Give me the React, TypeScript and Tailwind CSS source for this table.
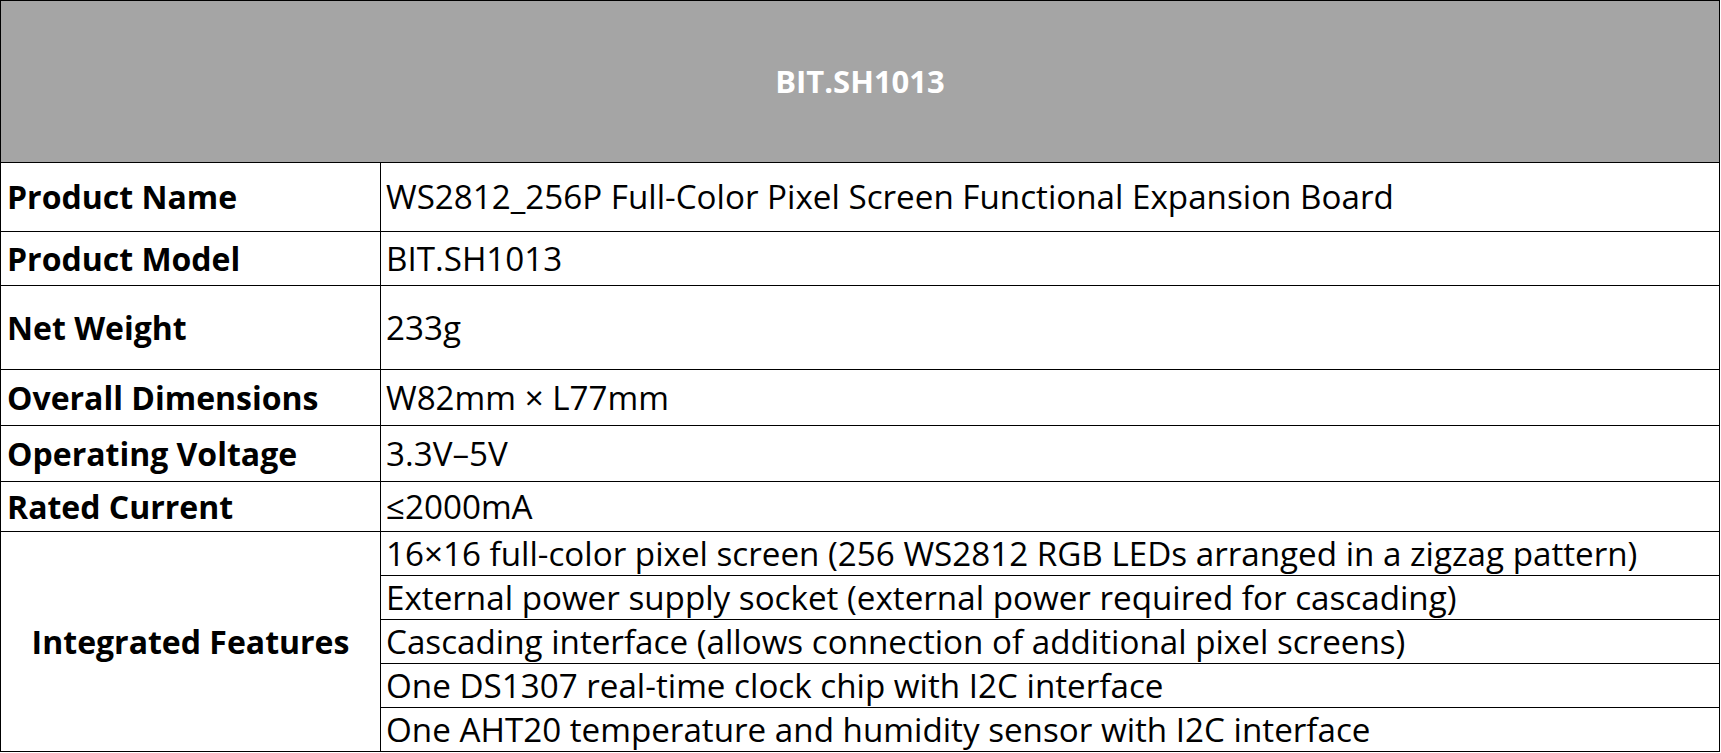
import React from "react";

const rows: { label: string; value: string; h: string }[] = [
  { label: "Product Name", value: "WS2812_256P Full-Color Pixel Screen Functional Expansion Board", h: "h-[68px]" },
  { label: "Product Model", value: "BIT.SH1013", h: "h-[53px]" },
  { label: "Net Weight", value: "233g", h: "h-[83px]" },
  { label: "Overall Dimensions", value: "W82mm × L77mm", h: "h-[55px]" },
  { label: "Operating Voltage", value: "3.3V–5V", h: "h-[55px]" },
  { label: "Rated Current", value: "≤2000mA", h: "h-[49px]" },
];

const features = [
  "16×16 full-color pixel screen (256 WS2812 RGB LEDs arranged in a zigzag pattern)",
  "External power supply socket (external power required for cascading)",
  "Cascading interface (allows connection of additional pixel screens)",
  "One DS1307 real-time clock chip with I2C interface",
  "One AHT20 temperature and humidity sensor with I2C interface",
];

export default function App() {
  return (
    <div className="w-[1721px] h-[753px] bg-white text-black" style={{ fontFamily: '"Open Sans", "Noto Sans", sans-serif' }}>
      <div className="grid w-[1720px] grid-cols-[379px_1338px] gap-px bg-black p-px">
        <div className="col-span-2 flex h-[161px] items-center justify-center bg-[#a5a5a5] text-[31px] font-bold leading-none text-white">
          BIT.SH1013
        </div>
        {rows.map((r) => (
          <React.Fragment key={r.label}>
            <div className={`flex items-center whitespace-nowrap bg-white pl-[6px] text-[32px] font-bold leading-none ${r.h}`}>{r.label}</div>
            <div className={`flex items-center whitespace-nowrap bg-white pl-[5px] text-[33.2px] leading-none ${r.h}`}>{r.value}</div>
          </React.Fragment>
        ))}
        <div className="row-span-5 flex items-center justify-center whitespace-nowrap bg-white text-[32px] font-bold leading-none">
          Integrated Features
        </div>
        {features.map((f) => (
          <div key={f} className="flex h-[43px] items-center whitespace-nowrap bg-white pl-[5px] text-[33.2px] leading-none">
            {f}
          </div>
        ))}
      </div>
    </div>
  );
}
